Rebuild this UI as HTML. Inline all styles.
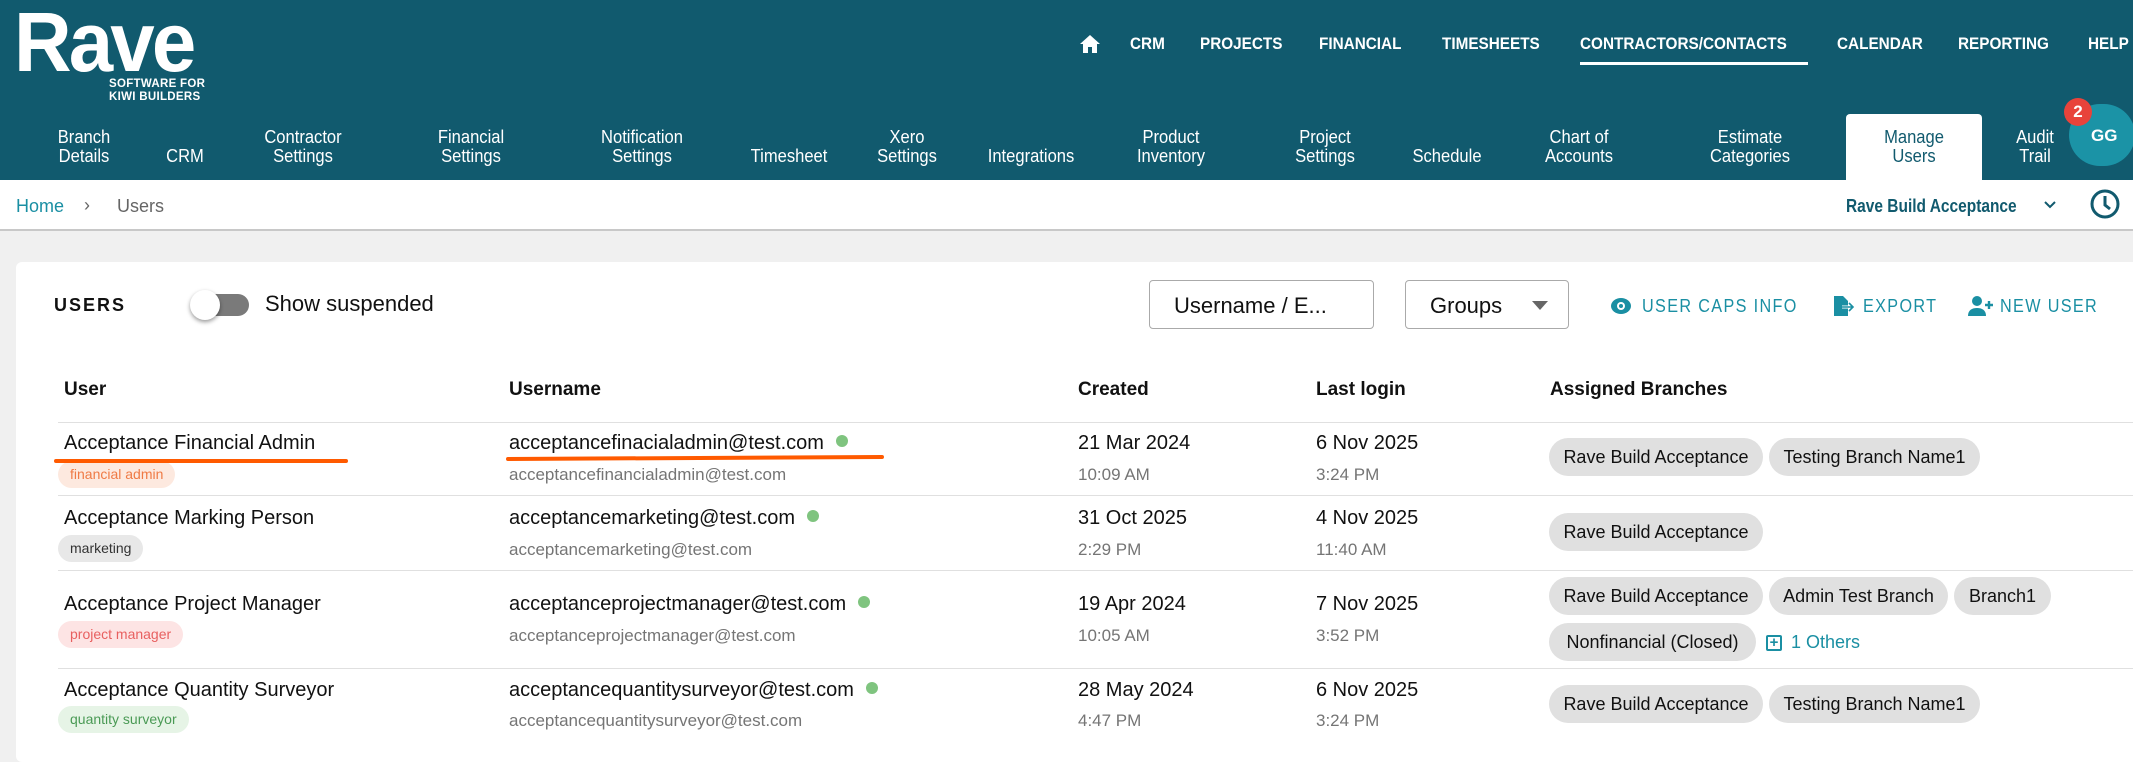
<!DOCTYPE html>
<html><head><meta charset="utf-8">
<style>
*{margin:0;padding:0;box-sizing:border-box}
body{width:2133px;height:738px;overflow:hidden;background:#f0f0f0;font-family:"Liberation Sans",Arial,sans-serif;position:relative;color:#111}
.a{position:absolute;white-space:nowrap}
#hdr{position:absolute;left:0;top:0;width:2133px;height:180px;background:#115a6e}
.tn{position:absolute;top:34px;color:#fff;font-weight:bold;font-size:17px;transform:scaleX(.9);transform-origin:left}
.sn{position:absolute;top:128px;color:#fff;font-size:18px;line-height:19px;text-align:center;transform:translateX(-50%) scaleX(.92)}
#crumb{position:absolute;left:0;top:180px;width:2133px;height:51px;background:#fff;border-bottom:2px solid #c8c8c8}
#card{position:absolute;left:16px;top:262px;width:2140px;height:500px;background:#fff;border-radius:6px}
.th{position:absolute;top:379px;font-weight:bold;font-size:19px}
.t1{font-size:20px;color:#111}
.t2{font-size:17px;color:#757575}
.hl{position:absolute;left:58px;width:2075px;height:1px;background:#e0e0e0}
.tag{position:absolute;height:27px;line-height:27px;border-radius:14px;padding:0 12px;font-size:14px}
.chip{position:absolute;height:38px;line-height:38px;border-radius:19px;background:#e0e0e0;font-size:18px;text-align:center;color:#111}
.dot{display:inline-block;width:12px;height:12px;border-radius:6px;background:#7fc47f;margin-left:12px;vertical-align:2px}
.act{position:absolute;top:296px;color:#1a8fa3;font-size:18px;letter-spacing:1.5px;font-weight:500;transform:scaleX(.9);transform-origin:left}
</style></head><body>
<div id="hdr">
 <div class="a" style="left:14px;top:0;line-height:84px;color:#fff;font-size:84px;font-weight:bold;letter-spacing:-3px;transform:scaleX(.95);transform-origin:left">Rave</div>
 <div class="a" style="left:109px;top:78px;color:#fff;font-size:11.5px;font-weight:bold;line-height:13px;letter-spacing:.3px">SOFTWARE FOR<br>KIWI BUILDERS</div>
 <svg class="a" style="left:1079px;top:34px" width="22" height="20" viewBox="0 0 22 20"><path d="M11 1L1 10h3v9h5v-6h4v6h5v-9h3z" fill="#fff"/></svg>
 <div class="tn" style="left:1130px">CRM</div>
 <div class="tn" style="left:1200px">PROJECTS</div>
 <div class="tn" style="left:1319px">FINANCIAL</div>
 <div class="tn" style="left:1442px">TIMESHEETS</div>
 <div class="tn" style="left:1580px">CONTRACTORS/CONTACTS</div>
 <div class="a" style="left:1580px;top:62px;width:228px;height:3px;background:#fff"></div>
 <div class="tn" style="left:1837px">CALENDAR</div>
 <div class="tn" style="left:1958px">REPORTING</div>
 <div class="tn" style="left:2088px">HELP</div>
 <div class="a" style="left:1846px;top:114px;width:136px;height:66px;background:#fff;border-radius:4px 4px 0 0"></div>
 <div class="sn" style="left:84px">Branch<br>Details</div>
 <div class="sn" style="left:185px;top:147px">CRM</div>
 <div class="sn" style="left:303px">Contractor<br>Settings</div>
 <div class="sn" style="left:471px">Financial<br>Settings</div>
 <div class="sn" style="left:642px">Notification<br>Settings</div>
 <div class="sn" style="left:789px;top:147px">Timesheet</div>
 <div class="sn" style="left:907px">Xero<br>Settings</div>
 <div class="sn" style="left:1031px;top:147px">Integrations</div>
 <div class="sn" style="left:1171px">Product<br>Inventory</div>
 <div class="sn" style="left:1325px">Project<br>Settings</div>
 <div class="sn" style="left:1447px;top:147px">Schedule</div>
 <div class="sn" style="left:1579px">Chart of<br>Accounts</div>
 <div class="sn" style="left:1750px">Estimate<br>Categories</div>
 <div class="sn" style="left:1914px;color:#115a6e">Manage<br>Users</div>
 <div class="sn" style="left:2035px">Audit<br>Trail</div>
 <div class="a" style="left:2069px;top:104px;width:66px;height:62px;border-radius:33px;background:#1b93a6"></div>
 <div class="a" style="left:2091px;top:126px;color:#fff;font-weight:bold;font-size:17px">GG</div>
 <div class="a" style="left:2064px;top:98px;width:28px;height:28px;border-radius:14px;background:#e8433b;color:#fff;font-weight:bold;font-size:17px;text-align:center;line-height:28px">2</div>
</div>
<div id="crumb">
 <div class="a" style="left:16px;top:16px;color:#1a8fa3;font-size:18px">Home</div>
 <div class="a" style="left:84px;top:15px;color:#666;font-size:18px">›</div>
 <div class="a" style="left:117px;top:16px;color:#666;font-size:18px">Users</div>
 <div class="a" style="left:1846px;top:16px;color:#115a6e;font-size:18px;font-weight:bold;transform:scaleX(.86);transform-origin:left">Rave Build Acceptance</div>
 <svg class="a" style="left:2043px;top:20px" width="14" height="10" viewBox="0 0 14 10"><path d="M2 2l5 5 5-5" fill="none" stroke="#115a6e" stroke-width="2"/></svg>
 <svg class="a" style="left:2089px;top:8px" width="32" height="32" viewBox="0 0 32 32"><circle cx="16" cy="16" r="13" fill="none" stroke="#115a6e" stroke-width="3"/><path d="M16 8v9l5 4" fill="none" stroke="#115a6e" stroke-width="3"/></svg>
</div>
<div id="card"></div>
<div class="a" style="left:54px;top:295px;font-weight:bold;font-size:18px;letter-spacing:2px">USERS</div>
<div class="a" style="left:195px;top:294px;width:54px;height:22px;border-radius:11px;background:#7a7a7a"></div>
<div class="a" style="left:190px;top:290px;width:30px;height:30px;border-radius:15px;background:#fff;box-shadow:0 2px 4px rgba(0,0,0,.4)"></div>
<div class="a" style="left:265px;top:291px;font-size:22px">Show suspended</div>
<div class="a" style="left:1149px;top:280px;width:225px;height:49px;border:1px solid #aaa;border-radius:4px;font-size:22px;padding:12px 0 0 24px">Username / E...</div>
<div class="a" style="left:1405px;top:280px;width:164px;height:49px;border:1px solid #aaa;border-radius:4px;font-size:22px;padding:12px 0 0 24px">Groups</div>
<svg class="a" style="left:1532px;top:301px" width="16" height="10"><path d="M0 0h16L8 9z" fill="#666"/></svg>
<svg class="a" style="left:1611px;top:297px" width="20" height="18" viewBox="0 0 20 18"><ellipse cx="10" cy="9" rx="10" ry="8" fill="#1a8fa3"/><circle cx="10" cy="9" r="4" fill="#fff"/><circle cx="10" cy="9" r="2" fill="#1a8fa3"/></svg>
<div class="act" style="left:1642px">USER CAPS INFO</div>
<svg class="a" style="left:1833px;top:296px" width="22" height="20" viewBox="0 0 22 20"><path d="M1 0h9l5 5v15H1z" fill="#1a8fa3"/><path d="M9 11h11M16 7l4 4-4 4" fill="none" stroke="#fff" stroke-width="3"/><path d="M9 11h11M16 7l4 4-4 4" fill="none" stroke="#1a8fa3" stroke-width="1.6"/></svg>
<div class="act" style="left:1863px">EXPORT</div>
<svg class="a" style="left:1968px;top:296px" width="26" height="20" viewBox="0 0 26 20"><circle cx="9" cy="5" r="5" fill="#1a8fa3"/><path d="M0 20c0-6 4-8 9-8s9 2 9 8z" fill="#1a8fa3"/><path d="M21 5v8M17 9h8" stroke="#1a8fa3" stroke-width="2.4"/></svg>
<div class="act" style="left:2000px">NEW USER</div>

<div class="th" style="left:64px">User</div>
<div class="th" style="left:509px">Username</div>
<div class="th" style="left:1078px">Created</div>
<div class="th" style="left:1316px">Last login</div>
<div class="th" style="left:1550px">Assigned Branches</div>
<div class="hl" style="top:422px"></div>
<div class="hl" style="top:495px"></div>
<div class="hl" style="top:570px"></div>
<div class="hl" style="top:668px"></div>

<div class="a t1" style="left:64px;top:432px">Acceptance Financial Admin</div>
<div class="tag" style="left:58px;top:461px;background:#fde9df;color:#ef7a45">financial admin</div>
<div class="a" style="left:54px;top:459px;width:294px;height:4px;background:#ff5a00;border-radius:2px"></div>
<div class="a t1" style="left:509px;top:432px">acceptancefinacialadmin@test.com<span class="dot"></span></div>
<div class="a" style="left:506px;top:456px;width:378px;height:4px;background:#ff5a00;border-radius:2px;transform:rotate(-.3deg)"></div>
<div class="a t2" style="left:509px;top:465px">acceptancefinancialadmin@test.com</div>
<div class="a t1" style="left:1078px;top:432px">21 Mar 2024</div>
<div class="a t2" style="left:1078px;top:465px">10:09 AM</div>
<div class="a t1" style="left:1316px;top:432px">6 Nov 2025</div>
<div class="a t2" style="left:1316px;top:465px">3:24 PM</div>
<div class="chip" style="left:1549px;top:438px;width:214px">Rave Build Acceptance</div>
<div class="chip" style="left:1769px;top:438px;width:211px">Testing Branch Name1</div>

<div class="a t1" style="left:64px;top:507px">Acceptance Marking Person</div>
<div class="tag" style="left:58px;top:535px;background:#e8e8e8;color:#333">marketing</div>
<div class="a t1" style="left:509px;top:507px">acceptancemarketing@test.com<span class="dot"></span></div>
<div class="a t2" style="left:509px;top:540px">acceptancemarketing@test.com</div>
<div class="a t1" style="left:1078px;top:507px">31 Oct 2025</div>
<div class="a t2" style="left:1078px;top:540px">2:29 PM</div>
<div class="a t1" style="left:1316px;top:507px">4 Nov 2025</div>
<div class="a t2" style="left:1316px;top:540px">11:40 AM</div>
<div class="chip" style="left:1549px;top:513px;width:214px">Rave Build Acceptance</div>

<div class="a t1" style="left:64px;top:593px">Acceptance Project Manager</div>
<div class="tag" style="left:58px;top:621px;background:#fde4e4;color:#e86060">project manager</div>
<div class="a t1" style="left:509px;top:593px">acceptanceprojectmanager@test.com<span class="dot"></span></div>
<div class="a t2" style="left:509px;top:626px">acceptanceprojectmanager@test.com</div>
<div class="a t1" style="left:1078px;top:593px">19 Apr 2024</div>
<div class="a t2" style="left:1078px;top:626px">10:05 AM</div>
<div class="a t1" style="left:1316px;top:593px">7 Nov 2025</div>
<div class="a t2" style="left:1316px;top:626px">3:52 PM</div>
<div class="chip" style="left:1549px;top:577px;width:214px">Rave Build Acceptance</div>
<div class="chip" style="left:1769px;top:577px;width:179px">Admin Test Branch</div>
<div class="chip" style="left:1954px;top:577px;width:97px">Branch1</div>
<div class="chip" style="left:1549px;top:623px;width:207px">Nonfinancial (Closed)</div>
<div class="a" style="left:1766px;top:635px;width:16px;height:16px;border:2px solid #1a8fa3;border-radius:2px;color:#1a8fa3;font-size:15px;line-height:12px;text-align:center;font-weight:bold">+</div>
<div class="a" style="left:1791px;top:632px;color:#1a8fa3;font-size:18px">1 Others</div>

<div class="a t1" style="left:64px;top:679px">Acceptance Quantity Surveyor</div>
<div class="tag" style="left:58px;top:706px;background:#e6f4e6;color:#4a9a55">quantity surveyor</div>
<div class="a t1" style="left:509px;top:679px">acceptancequantitysurveyor@test.com<span class="dot"></span></div>
<div class="a t2" style="left:509px;top:711px">acceptancequantitysurveyor@test.com</div>
<div class="a t1" style="left:1078px;top:679px">28 May 2024</div>
<div class="a t2" style="left:1078px;top:711px">4:47 PM</div>
<div class="a t1" style="left:1316px;top:679px">6 Nov 2025</div>
<div class="a t2" style="left:1316px;top:711px">3:24 PM</div>
<div class="chip" style="left:1549px;top:685px;width:214px">Rave Build Acceptance</div>
<div class="chip" style="left:1769px;top:685px;width:211px">Testing Branch Name1</div>
</body></html>
